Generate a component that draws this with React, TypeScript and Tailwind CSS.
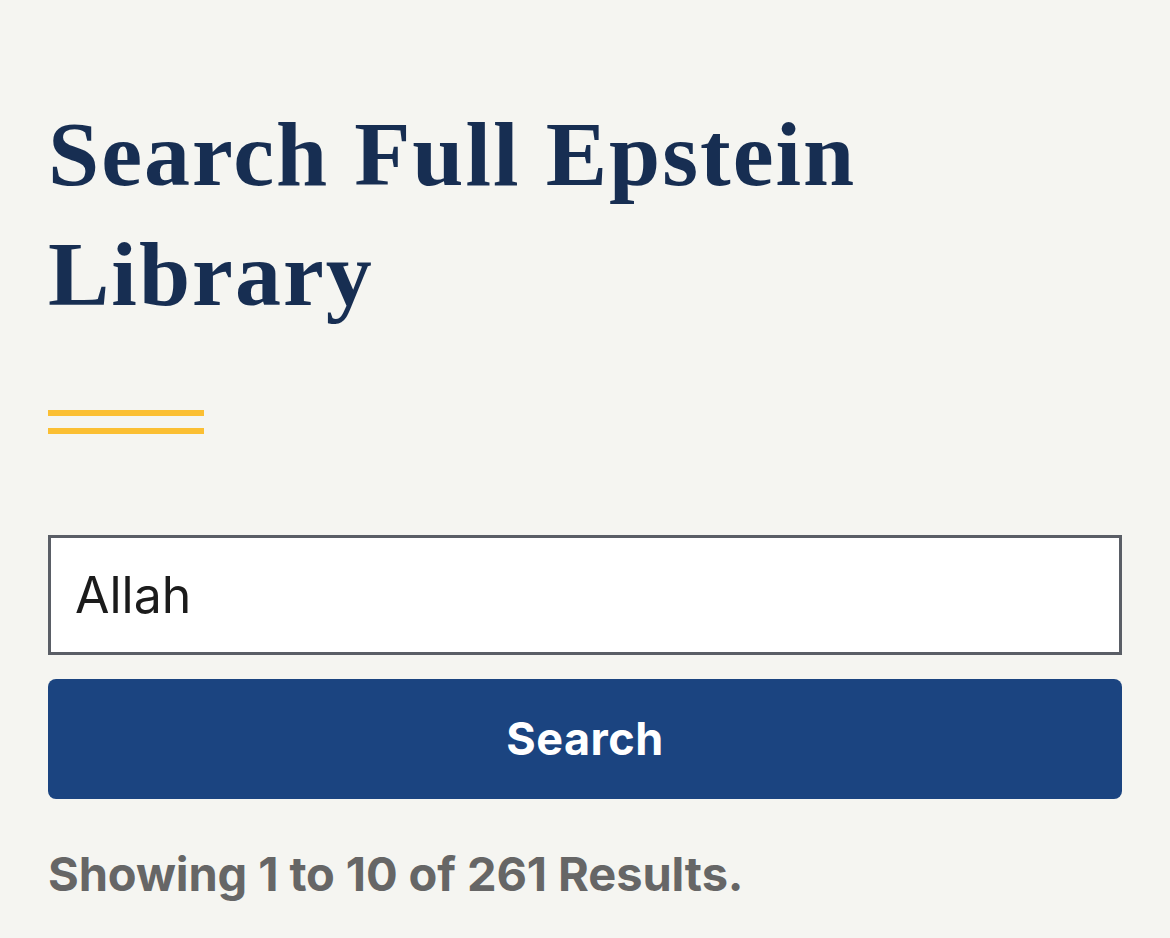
export default function App() {
  return (
    <div className="min-h-[938px] bg-[#f5f5f1] px-12 pt-[94px]">
      <h1 className="font-['Liberation_Serif',serif] text-[92px] leading-[120px] font-bold tracking-[2px] text-[#172e52]">
        Search Full Epstein Library
      </h1>
      <div className="mt-[76px] flex w-[156px] flex-col gap-3">
        <div className="h-[6px] bg-[#fbbf33]" />
        <div className="h-[6px] bg-[#fbbf33]" />
      </div>
      <form className="mt-[101px] flex flex-col gap-6" onSubmit={e => e.preventDefault()}>
        <input
          type="text"
          defaultValue="Allah"
          className="h-[120px] w-full border-[3px] border-[#5a5e66] bg-white px-[24px] font-['Inter',sans-serif] text-[50px] text-[#1b1b1b] outline-none"
        />
        <button
          type="submit"
          className="h-[120px] w-full rounded-lg bg-[#1b4480] font-['Inter',sans-serif] text-[45px] font-bold tracking-[0.5px] text-white"
        >
          Search
        </button>
      </form>
      <p className="mt-[47px] font-['Inter',sans-serif] text-[47px] leading-[1.2] font-bold tracking-[-0.1px] text-[#666666]">
        Showing 1 to 10 of 261 Results.
      </p>
    </div>
  );
}
